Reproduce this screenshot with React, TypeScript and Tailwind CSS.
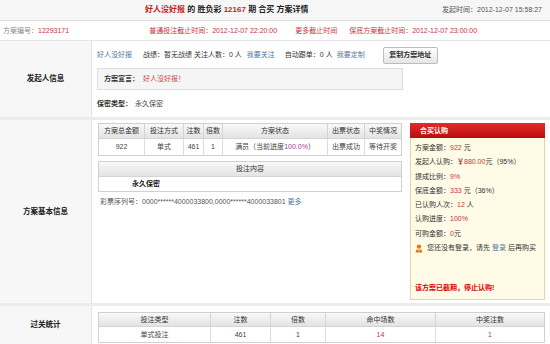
import React from 'react';

const red = 'text-[#c8323c]';
const link = 'text-[#4f78a6]';

function UserBadge() {
  return (
    <svg width="8" height="9" viewBox="0 0 8 9" className="mr-[4px] shrink-0">
      <circle cx="4" cy="2.6" r="2.2" fill="#e57a12" />
      <path d="M0.5 8.6 L1.5 5.4 L6.5 5.4 L7.5 8.6 Z" fill="#e57a12" />
      <path d="M3.2 5.4 L4 7.2 L4.8 5.4 Z" fill="#fff3c0" />
    </svg>
  );
}

const th = 'border-r border-[#d4d4d4] last:border-r-0 flex items-center justify-center';
const td = 'border-r border-[#dcdcdc] last:border-r-0 flex items-center justify-center';

function SideLabel({ children }: { children: React.ReactNode }) {
  return (
    <div className="w-[92px] shrink-0 bg-[#f7f7f7] border-r border-[#e4e4e4] flex items-center justify-center font-bold text-[7.5px] text-[#222]">
      {children}
    </div>
  );
}

export default function App() {
  return (
    <div
      className="w-[550px] h-[344px] overflow-hidden bg-white text-[7px] leading-[14px] text-[#444]"
      style={{ fontFamily: '"Liberation Sans", "Noto Sans CJK SC", sans-serif' }}
    >
      {/* header */}
      <div className="h-[21px] bg-[#f6f6f6] border-b border-[#e0e0e0] flex items-center">
        <div className="pl-[145px] font-bold text-[8px] text-[#222]">
          <span className="text-[#c81e1e]">好人没好报</span> 的 胜负彩 <span className="text-[#c81e1e]">12167</span> 期 合买 方案详情
        </div>
        <div className="ml-auto pr-[8px] text-[#555]">发起时间：2012-12-07 15:58:27</div>
      </div>
      <div className="h-[20px] border-b border-[#e4e4e4] flex items-center pl-[3px]">
        <span className="text-[#888]">方案编号：</span>
        <span className={red}>12293171</span>
        <span className={`ml-[80px] ${red}`}>普通投注截止时间：2012-12-07 22:20:00</span>
        <span className={`ml-[18px] ${red}`}>更多截止时间</span>
        <span className={`ml-[12px] ${red}`}>保底方案截止时间：2012-12-07 23:00:00</span>
      </div>

      {/* 发起人信息 */}
      <div className="flex h-[79px] border-b-[3px] border-[#ececec]">
        <SideLabel>发起人信息</SideLabel>
        <div className="pl-[5px] pt-[5px]">
          <div className="flex items-center h-[18px]">
            <span className={`${link} mr-[11px]`}>好人没好报</span>
            <span className="text-[#333]">战绩：暂无战绩 关注人数：0 人</span>
            <span className={`${link} ml-[5px]`}>我要关注</span>
            <span className="ml-[10px] text-[#333]">自动跟单：0 人</span>
            <span className={`${link} ml-[4px]`}>我要定制</span>
            <button className="ml-[18px] h-[17px] w-[55px] rounded-[2px] border border-[#bdbdbd] bg-gradient-to-b from-[#ffffff] to-[#e6e6e6] font-bold text-[7px] text-[#333]">
              复制方案地址
            </button>
          </div>
          <div className="mt-[4px] w-[306px] h-[22px] bg-[#f5f5f5] border border-[#dedede] flex items-center pl-[6px]">
            <span className="font-bold text-[#333]">方案宣言：</span>
            <span className="ml-[4px] text-[#c84848]">好人没好报！</span>
          </div>
          <div className="mt-[7px] flex items-center">
            <span className="font-bold text-[#333]">保密类型：</span>
            <span className="ml-[3px]">永久保密</span>
          </div>
        </div>
      </div>

      {/* 方案基本信息 */}
      <div className="flex h-[186px] border-b-[3px] border-[#ececec]">
        <SideLabel>方案基本信息</SideLabel>
        <div className="flex pl-[6px] pt-[3px] gap-[8px]">
          <div className="w-[304px]">
            <div className="border border-[#d0d0d0]">
              <div className="grid grid-cols-[46px_39px_20px_19px_105px_37px_1fr] h-[15px] bg-gradient-to-b from-[#f9f9f9] to-[#e3e3e3] border-b border-[#d4d4d4] text-[#333]">
                <div className={th}>方案总金额</div>
                <div className={th}>投注方式</div>
                <div className={th}>注数</div>
                <div className={th}>倍数</div>
                <div className={th}>方案状态</div>
                <div className={th}>出票状态</div>
                <div className={th}>中奖情况</div>
              </div>
              <div className="grid grid-cols-[46px_39px_20px_19px_105px_37px_1fr] h-[16px] text-[#444]">
                <div className={td}>922</div>
                <div className={td}>单式</div>
                <div className={td}>461</div>
                <div className={td}>1</div>
                <div className={td}>
                  满员（当前进度<span className="text-[#9a3a8a]">100.0%</span>）
                </div>
                <div className={td}>出票成功</div>
                <div className={td}>等待开奖</div>
              </div>
            </div>
            <div className="mt-[5px] border border-[#d0d0d0]">
              <div className="h-[15px] bg-gradient-to-b from-[#f9f9f9] to-[#e3e3e3] border-b border-[#d4d4d4] flex items-center justify-center text-[#333]">
                投注内容
              </div>
              <div className="h-[14px] flex items-center">
                <div className="w-[94px] text-center font-bold text-[#222]">永久保密</div>
              </div>
            </div>
            <div className="mt-[3px] pl-[2px] text-[#555]">
              彩票序列号：0000******4000033800,0000******4000033801 <span className={link}>更多</span>
            </div>
          </div>

          <div className="w-[135px] h-[177px] border border-[#e6d3a0] bg-[#fffbe6] flex flex-col">
            <div className="h-[15px] -mx-px -mt-px bg-gradient-to-b from-[#e42a2a] to-[#b80b0b] flex items-center pl-[10px] font-bold text-white">
              合买认购
            </div>
            <div className="pl-[4px] pt-[3px] leading-[14.3px] text-[#333]">
              <div>方案金额：<span className={red}>922</span> 元</div>
              <div>发起人认购：<span className={`${red} font-bold`}>￥</span><span className={red}>880.00</span>元（95%）</div>
              <div>提成比例：<span className={red}>9%</span></div>
              <div>保底金额：<span className={red}>333</span> 元（36%）</div>
              <div>已认购人次：<span className={red}>12</span> 人</div>
              <div>认购进度：<span className={red}>100%</span></div>
              <div>可购金额：<span className={red}>0</span>元</div>
              <div className="flex items-center">
                <UserBadge />
                您还没有登录，请先 <span className={`${link} mx-[2px]`}>登录</span> 后再购买
              </div>
            </div>
            <div className="mt-auto mb-[4px] pl-[4px] font-bold text-[#e00000]">该方案已截期，停止认购!</div>
          </div>
        </div>
      </div>

      {/* 过关统计 */}
      <div className="flex h-[38px]">
        <SideLabel>过关统计</SideLabel>
        <div className="pl-[6px] pt-[6px]">
          <div className="w-[447px] border border-[#d0d0d0]">
            <div className="grid grid-cols-[112px_60px_55px_110px_1fr] h-[14px] bg-gradient-to-b from-[#f9f9f9] to-[#e3e3e3] border-b border-[#d4d4d4] text-[#333]">
              <div className={th}>投注类型</div>
              <div className={th}>注数</div>
              <div className={th}>倍数</div>
              <div className={th}>命中场数</div>
              <div className={th}>中奖注数</div>
            </div>
            <div className="grid grid-cols-[112px_60px_55px_110px_1fr] h-[15px]">
              <div className={td}>单式投注</div>
              <div className={td}>461</div>
              <div className={td}>1</div>
              <div className={`${td} ${red}`}>14</div>
              <div className={`${td} ${red}`}>1</div>
            </div>
          </div>
        </div>
      </div>
    </div>
  );
}
